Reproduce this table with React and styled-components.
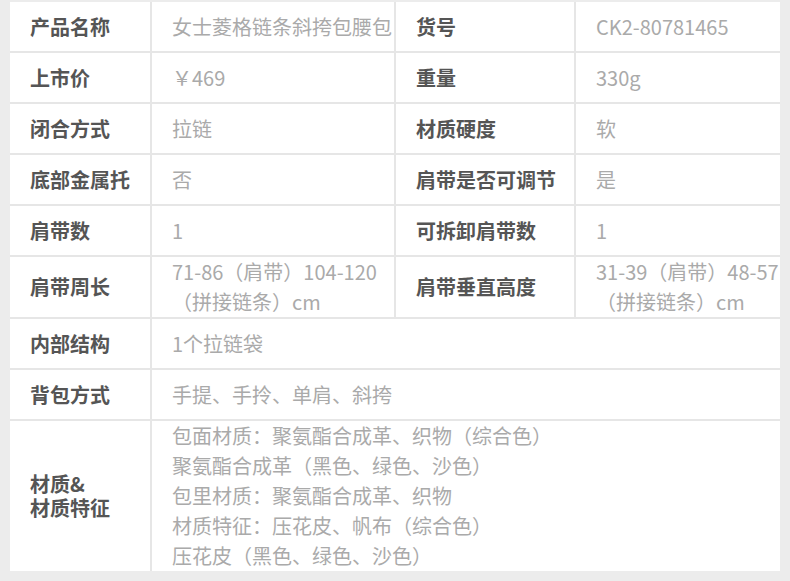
import React from 'react'
import styled, { createGlobalStyle } from 'styled-components'

const GlobalStyle = createGlobalStyle`
  html, body {
    margin: 0;
    padding: 0;
    background: #ececec;
  }
  body {
    font-family: "Noto Sans CJK SC", "Noto Sans", sans-serif;
  }
`

const rows = [
  { cells: [['产品名称', '女士菱格链条斜挎包腰包'], ['货号', 'CK2-80781465']] },
  { cells: [['上市价', '￥469'], ['重量', '330g']] },
  { cells: [['闭合方式', '拉链'], ['材质硬度', '软']] },
  { cells: [['底部金属托', '否'], ['肩带是否可调节', '是']] },
  { cells: [['肩带数', '1'], ['可拆卸肩带数', '1']] },
  {
    cells: [
      ['肩带周长', ['71-86（肩带）104-120', '（拼接链条）cm']],
      ['肩带垂直高度', ['31-39（肩带）48-57', '（拼接链条）cm']]
    ]
  },
  { wide: ['内部结构', '1个拉链袋'] },
  { wide: ['背包方式', '手提、手拎、单肩、斜挎'] },
  {
    wide: [
      ['材质&', '材质特征'],
      [
        '包面材质：聚氨酯合成革、织物（综合色）',
        '聚氨酯合成革（黑色、绿色、沙色）',
        '包里材质：聚氨酯合成革、织物',
        '材质特征：压花皮、帆布（综合色）',
        '压花皮（黑色、绿色、沙色）'
      ]
    ]
  }
]

const lines = (text) =>
  Array.isArray(text) ? text.map((t, i) => <Line key={i}>{t}</Line>) : text

const App = () => {
  const cells = []
  rows.forEach((row, r) => {
    if (row.wide) {
      cells.push(<Label key={r + 'l'} $stacked={Array.isArray(row.wide[0])}>{lines(row.wide[0])}</Label>)
      cells.push(<Value key={r + 'v'} $span={3}>{lines(row.wide[1])}</Value>)
    } else {
      row.cells.forEach(([label, value], c) => {
        cells.push(<Label key={r + 'l' + c}>{label}</Label>)
        cells.push(<Value key={r + 'v' + c}>{lines(value)}</Value>)
      })
    }
  })

  return (
    <Page>
      <GlobalStyle />
      <SpecTable>{cells}</SpecTable>
    </Page>
  )
}

const Page = styled.div`
  width: 790px;
  height: 581px;
  padding: 2px 10px 0;
  box-sizing: border-box;
  background: #ececec;
`

const SpecTable = styled.div`
  display: grid;
  grid-template-columns: 140px 242px 178px 204px;
  grid-template-rows: repeat(5, 49px) 60px 49px 49px 150px;
  gap: 2px;
  background: #e6e6e6;
  width: 770px;
`

const Cell = styled.div`
  background: #fff;
  display: flex;
  flex-direction: column;
  justify-content: center;
  padding: 0 0 0 20px;
  font-size: 20px;
  white-space: nowrap;
  overflow: hidden;
`

const Label = styled(Cell)`
  color: #555;
  font-weight: 700;
  line-height: ${props => (props.$stacked ? '24px' : '30px')};
`

const Value = styled(Cell)`
  color: #aaa;
  font-weight: 400;
  line-height: 30px;
  grid-column: span ${props => props.$span || 1};
`

const Line = styled.div`
  white-space: nowrap;
`

export default App
